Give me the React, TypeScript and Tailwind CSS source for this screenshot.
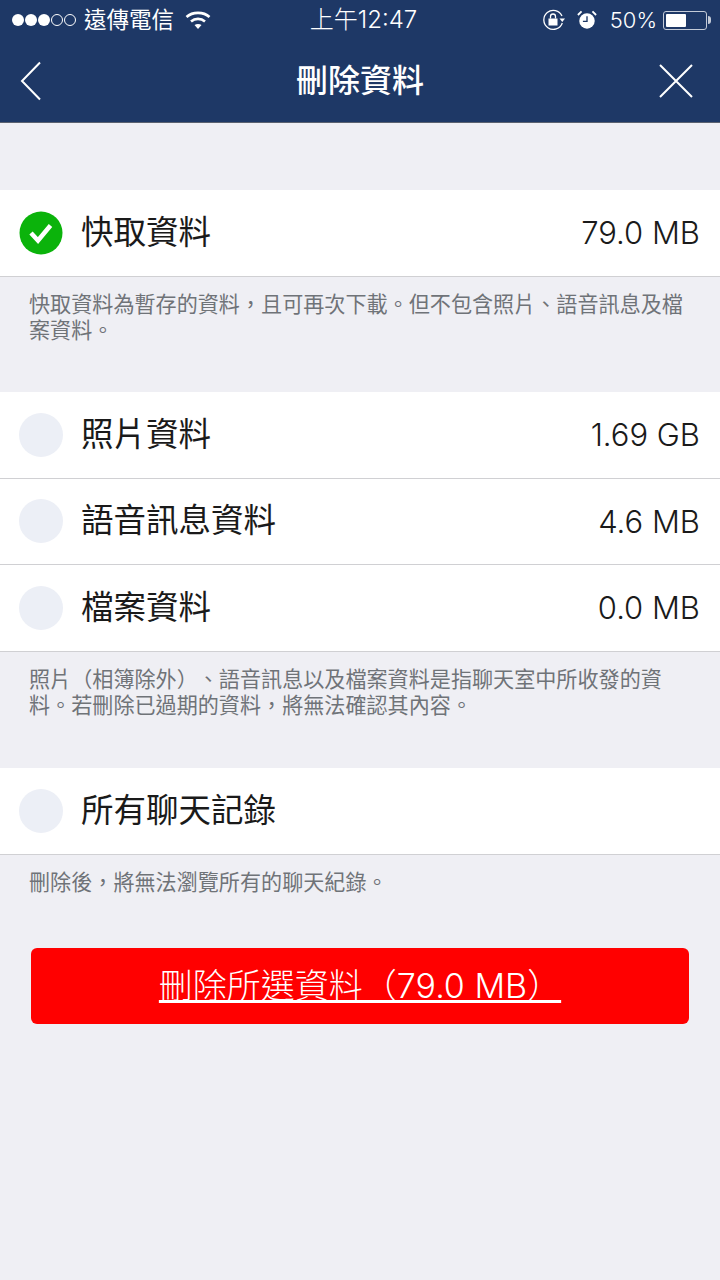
import type { ReactNode } from 'react'

const font = { fontFamily: 'Inter, "Noto Sans CJK TC", sans-serif' }

function Radio({ checked }: { checked?: boolean }) {
  if (checked) {
    return (
      <svg width="44" height="44" viewBox="0 0 44 44" className="shrink-0">
        <circle cx="22" cy="22" r="21.5" fill="#0bb30b" />
        <path d="M12 22 L19 29.5 L31.5 14.5" fill="none" stroke="#fff" strokeWidth="4.5" />
      </svg>
    )
  }
  return <div className="h-[44px] w-[44px] shrink-0 rounded-full bg-[#eceff6]" />
}

function Row({ label, size, checked }: { label: string; size?: string; checked?: boolean }) {
  return (
    <div className="flex h-[86.5px] items-center border-b border-[#d0d0d3] bg-white pl-[19px] pr-[20px]">
      <Radio checked={checked} />
      <span className="ml-[18px] flex-1 text-[32.5px] leading-none text-[#1a1a1a]">{label}</span>
      {size && <span className="text-[31px] font-[350] leading-none text-[#1a1a1a]">{size}</span>}
    </div>
  )
}

function Note({ children }: { children: ReactNode }) {
  return (
    <p className="px-[29px] pt-[15px] text-[21.1px] leading-[26px] text-[#6f7378] [text-spacing-trim:space-all]">
      {children}
    </p>
  )
}

function StatusBar() {
  return (
    <div className="relative flex h-[40px] items-center text-white">
      <div className="ml-[12px] flex items-center gap-[1px]">
        <span className="h-[12px] w-[12px] rounded-full bg-white" />
        <span className="h-[12px] w-[12px] rounded-full bg-white" />
        <span className="h-[12px] w-[12px] rounded-full bg-white" />
        <span className="h-[12px] w-[12px] rounded-full border border-white" />
        <span className="h-[12px] w-[12px] rounded-full border border-white" />
      </div>
      <span className="ml-[8px] text-[22.5px] leading-none">遠傳電信</span>
      <svg width="26" height="20" viewBox="0 0 26 20" className="ml-[11px]" fill="none" stroke="#fff" strokeWidth="2.6">
        <path d="M1.5 7 C7.5 1.5 18.5 1.5 24.5 7" />
        <path d="M6 11.5 C10 8 16 8 20 11.5" />
        <path d="M13 19 L9.5 15 C11.5 13.6 14.5 13.6 16.5 15 Z" fill="#fff" stroke="none" />
      </svg>
      <span className="absolute left-[7px] right-0 text-center text-[24px] font-light leading-none">上午12:47</span>
      <div className="ml-auto mr-[9px] flex items-center">
        <svg width="24" height="22" viewBox="0 0 24 22" fill="none" stroke="#fff" strokeWidth="1.3">
          <path d="M20 7 A9.5 9.5 0 1 0 20.3 14" />
          <path d="M17.5 9.5 H23 L20.3 13 Z" fill="#fff" stroke="none" />
          <rect x="6.5" y="9.5" width="9" height="7" fill="#fff" stroke="none" />
          <path d="M8.5 9.5 V7.5 A2.5 2.5 0 0 1 13.5 7.5 V9.5" />
        </svg>
        <svg width="20" height="20" viewBox="0 0 22 22" className="ml-[11px]">
          <circle cx="11" cy="12" r="8.5" fill="#fff" />
          <path d="M11 7 V12.5 H6.5" fill="none" stroke="#1e3866" strokeWidth="1.5" />
          <path d="M1 5.5 L5 1.5 M21 5.5 L17 1.5" stroke="#fff" strokeWidth="2" />
        </svg>
        <span className="ml-[13px] text-[22px] font-light leading-none">50%</span>
        <div className="ml-[6px] h-[19px] w-[44px] rounded-[3px] border border-[#c4cbd8] p-[2px]">
          <div className="h-full w-[20px] rounded-[1px] bg-white" />
        </div>
        <div className="ml-[1px] h-[8px] w-[3px] rounded-r-full bg-[#c4cbd8]" />
      </div>
    </div>
  )
}

export default function App() {
  return (
    <div className="h-[1280px] w-[720px] overflow-hidden bg-[#efeff4]" style={font}>
      <header className="h-[123px] border-b border-[#5b6270] bg-[#1e3866]">
        <StatusBar />
        <div className="grid h-[82px] grid-cols-[1fr_auto_1fr] items-center px-[20px] text-white">
          <svg width="22" height="40" viewBox="0 0 22 40" fill="none" stroke="#fff" strokeWidth="2">
            <path d="M20 1.5 L2 20 L20 38.5" />
          </svg>
          <span className="text-[32px] font-medium leading-none">刪除資料</span>
          <svg width="34" height="34" viewBox="0 0 34 34" fill="none" stroke="#fff" strokeWidth="2" className="mr-[7px] justify-self-end">
            <path d="M1 1 L33 33 M33 1 L1 33" />
          </svg>
        </div>
      </header>

      <section className="mt-[67px]">
        <Row label="快取資料" size="79.0 MB" checked />
        <Note>快取資料為暫存的資料，且可再次下載。但不包含照片、語音訊息及檔案資料。</Note>
      </section>

      <section className="mt-[48.5px]">
        <Row label="照片資料" size="1.69 GB" />
        <Row label="語音訊息資料" size="4.6 MB" />
        <Row label="檔案資料" size="0.0 MB" />
        <Note>
          照片（相簿除外）、語音訊息以及檔案資料是指聊天室中所收發的資
          <br />
          料。若刪除已過期的資料，將無法確認其內容。
        </Note>
      </section>

      <section className="mt-[49.5px]">
        <Row label="所有聊天記錄" />
        <Note>刪除後，將無法瀏覽所有的聊天紀錄。</Note>
      </section>

      <div className="mx-[31px] mt-[52.5px] flex h-[76px] items-center justify-center rounded-[6px] bg-[#ff0000] text-[34px] font-light leading-none text-white underline [text-spacing-trim:space-all]">
        刪除所選資料（79.0 MB）
      </div>
    </div>
  )
}
